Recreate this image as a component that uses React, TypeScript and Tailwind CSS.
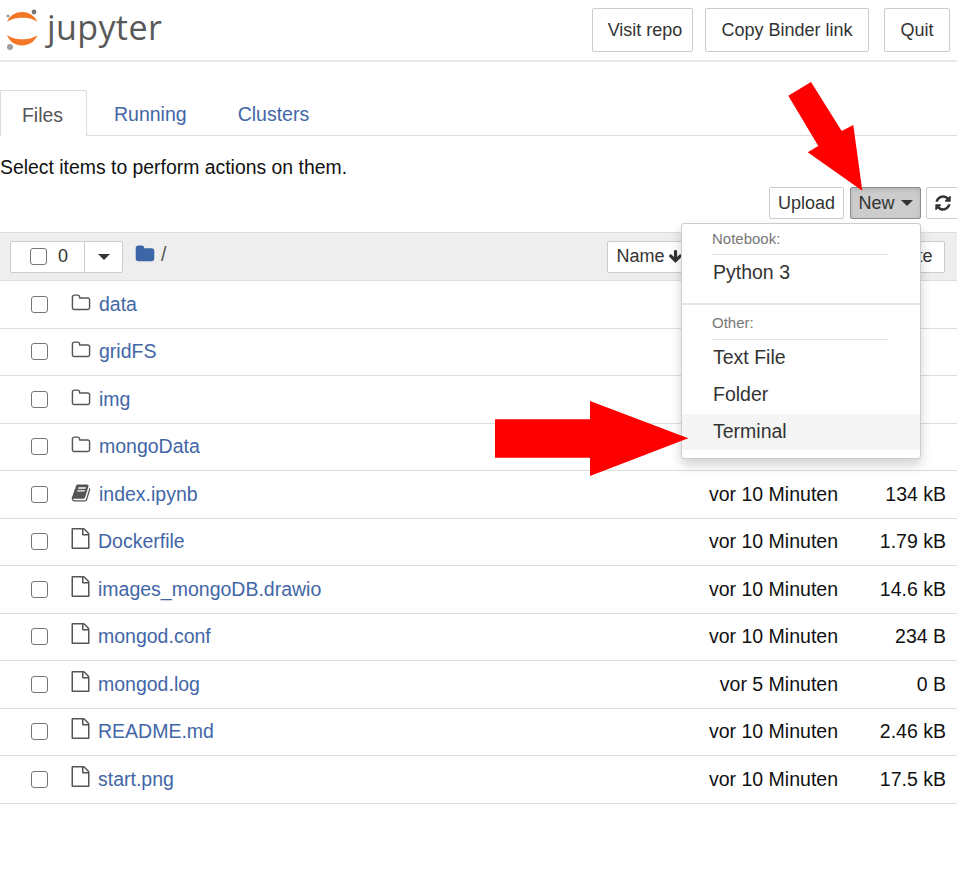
import React from 'react';

const rows = [
  { name: 'data', kind: 'folder', date: '', size: '' },
  { name: 'gridFS', kind: 'folder', date: '', size: '' },
  { name: 'img', kind: 'folder', date: '', size: '' },
  { name: 'mongoData', kind: 'folder', date: '', size: '' },
  { name: 'index.ipynb', kind: 'book', date: 'vor 10 Minuten', size: '134 kB' },
  { name: 'Dockerfile', kind: 'file', date: 'vor 10 Minuten', size: '1.79 kB' },
  { name: 'images_mongoDB.drawio', kind: 'file', date: 'vor 10 Minuten', size: '14.6 kB' },
  { name: 'mongod.conf', kind: 'file', date: 'vor 10 Minuten', size: '234 B' },
  { name: 'mongod.log', kind: 'file', date: 'vor 5 Minuten', size: '0 B' },
  { name: 'README.md', kind: 'file', date: 'vor 10 Minuten', size: '2.46 kB' },
  { name: 'start.png', kind: 'file', date: 'vor 10 Minuten', size: '17.5 kB' },
];

// Font Awesome 4 glyphs, 1792 box
const icons: Record<string, string> = {
  folder: 'M1600 1312v-704q0-40-28-68t-68-28h-704q-40 0-68-28t-28-68v-64q0-40-28-68t-68-28h-320q-40 0-68 28t-28 68v960q0 40 28 68t68 28h1216q40 0 68-28t28-68zm128-704v704q0 92-66 158t-158 66h-1216q-92 0-158-66t-66-158v-960q0-92 66-158t158-66h320q92 0 158 66t66 158v32h672q92 0 158 66t66 158z',
  file: 'M1596 380q28 28 48 76t20 88v1152q0 40-28 68t-68 28h-1344q-40 0-68-28t-28-68v-1600q0-40 28-68t68-28h896q40 0 88 20t76 48zm-444-244v376h376q-10-29-22-41l-313-313q-12-12-41-22zm384 1528v-1024h-416q-40 0-68-28t-28-68v-416h-768v1536h1280z',
  book: 'M1703 478q40 57 18 129l-275 906q-19 64-76.5 107.5t-122.5 43.5h-923q-77 0-148.5-53.5t-99.5-131.5q-24-67-2-127 0-4 3-27t4-37q1-8-3-21.5t-3-19.5q2-11 8-21t16.5-23.5 16.5-23.5q23-38 45-91.5t30-91.5q3-10 .5-30t-.5-28q3-11 17-28t17-23q21-36 42-92t25-90q1-9-2.5-32t.5-28q4-13 22-30.5t22-22.5q19-26 42.5-84.5t27.5-96.5q1-8-3-25.5t-2-26.5q2-8 9-18t18-23 17-21q8-12 16.5-30.5t15-35 16-36 19.5-32 26.5-23.5 36-11.5 47.5 5.5l-1 3q38-9 51-9h761q74 0 114 56t18 130l-274 906q-36 119-71.5 153.5t-128.5 34.5h-869q-27 0-38 15-11 16-1 43 24 70 144 70h923q29 0 56-15.5t35-41.5l300-987q7-22 5-57 38 15 59 43zm-1064 2q-4 13 2 22.5t20 9.5h608q13 0 25.5-9.5t16.5-22.5l21-64q4-13-2-22.5t-20-9.5h-608q-13 0-25.5 9.5t-16.5 22.5zm-83 256q-4 13 2 22.5t20 9.5h608q13 0 25.5-9.5t16.5-22.5l21-64q4-13-2-22.5t-20-9.5h-608q-13 0-25.5 9.5t-16.5 22.5z',
  refresh: 'M1639 1056q0 5-1 7-64 268-268 434.5t-478 166.5q-146 0-282.5-55t-243.5-157l-129 129q-19 19-45 19t-45-19-19-45v-448q0-26 19-45t45-19h448q26 0 45 19t19 45-19 45l-137 137q71 66 161 102t187 36q134 0 250-65t186-179q11-17 53-117 8-23 30-23h192q13 0 22.5 9.5t9.5 22.5zm25-800v448q0 26-19 45t-45 19h-448q-26 0-45-19t-19-45 19-45l138-138q-148-137-349-137-134 0-250 65t-186 179q-11 17-53 117-8 23-30 23h-199q-13 0-22.5-9.5t-9.5-22.5v-7q65-268 270-434.5t480-166.5q146 0 284 55.5t245 156.5l130-129q19-19 45-19t45 19 19 45z',
  arrowDown: 'M1675 832q0 53-37 90l-651 652q-39 37-91 37-53 0-90-37l-651-652q-38-36-38-90 0-53 38-91l74-75q39-37 91-37 53 0 90 37l294 294v-704q0-52 38-90t90-38h128q52 0 90 38t38 90v704l294-294q37-37 90-37 52 0 91 37l75 75q37 39 37 91z',
  solidFolder: 'M1728 608v704q0 92-66 158t-158 66h-1216q-92 0-158-66t-66-158v-960q0-92 66-158t158-66h320q92 0 158 66t66 158v32h672q92 0 158 66t66 158z',
};

function Fa({ name, size, color, className }: { name: string; size: number; color: string; className?: string }) {
  return (
    <svg width={size} height={size} viewBox="0 0 1792 1792" className={`shrink-0 ${className ?? ''}`}>
      <path d={icons[name]} fill={color} />
    </svg>
  );
}

function Logo() {
  return (
    <svg width="36" height="42" viewBox="0 0 36 42" className="shrink-0">
      <path d="M2 13 C7 -0.3 27 -0.3 32.5 13 C26 7.3 9 7.3 2 13 Z" fill="#f37726" />
      <path d="M2 26 C9 31.7 26 31.7 32.5 26 C27 40 7 40 2 26 Z" fill="#f37726" />
      <circle cx="29" cy="3" r="2.4" fill="#767677" />
      <circle cx="3" cy="7" r="1.6" fill="#9e9e9e" />
      <circle cx="5" cy="38" r="3" fill="#9e9e9e" />
    </svg>
  );
}

function Checkbox() {
  return <span className="block w-[17px] h-[17px] shrink-0 rounded-[3px] border-[1.5px] border-[#767676] bg-white" />;
}

function Btn({ children, className }: { children: React.ReactNode; className?: string }) {
  return (
    <div className={`flex items-center justify-center bg-white border border-[#ccc] rounded-[2px] text-[#333] text-[18px] ${className ?? ''}`}>
      {children}
    </div>
  );
}

export default function App() {
  return (
    <div className="relative w-[957px] h-[877px] overflow-hidden bg-white text-[19.5px] text-[#333] font-['Liberation_Sans',Arial,sans-serif]">
      {/* header */}
      <div className="flex items-center h-[62px] border-b-2 border-[#e7e7e7] pl-[5px]">
        <Logo />
        <span className="ml-[6px] -mt-[6px] text-[34px] leading-[44px] tracking-[0.4px] text-[#585858] font-['Open_Sans',sans-serif]">jupyter</span>
        <div className="flex ml-auto mr-[7px]">
          <Btn className="w-[101px] h-[44px] pl-[5px]">Visit repo</Btn>
          <Btn className="w-[164px] h-[44px] ml-[12px]">Copy Binder link</Btn>
          <Btn className="w-[66px] h-[44px] ml-[15px]">Quit</Btn>
        </div>
      </div>

      {/* tabs */}
      <div className="flex mt-[28px] h-[46px] border-b border-[#ddd] text-[#4266a6]">
        <div className="w-[87px] h-[46px] flex items-center justify-center pt-[4px] pr-[2px] bg-white border border-b-0 border-[#ddd] rounded-tr-[3px] text-[#555]">Files</div>
        <div className="flex items-center pt-[4px] ml-[27px]">Running</div>
        <div className="flex items-center pt-[4px] ml-[51px]">Clusters</div>
      </div>

      <div className="h-[51px] leading-[62px] text-[19.4px] text-[#111]">Select items to perform actions on them.</div>

      {/* upload / new */}
      <div className="flex justify-start h-[32px] pl-[769px]">
        <Btn className="w-[75px] h-[32px] shrink-0">Upload</Btn>
        <div className="ml-[6px] w-[71px] h-[32px] shrink-0 flex items-center justify-center gap-[6px] text-[18px] bg-[#ccc] border border-[#8c8c8c] rounded-[2px] shadow-[inset_0_2px_4px_rgba(0,0,0,0.12)]">
          New
          <span className="w-0 h-0 border-x-[6px] border-x-transparent border-t-[6px] border-t-[#333]" />
        </div>
        <Btn className="ml-[5px] w-[40px] h-[32px] shrink-0 pr-[7px]">
          <Fa name="refresh" size={18} color="#333" />
        </Btn>
      </div>

      {/* list toolbar */}
      <div className="flex items-center mt-[13px] h-[49px] bg-[#eee] border-y border-[#ddd] pl-[10px]">
        <div className="flex w-[113px] h-[32px] bg-white border border-[#ccc] rounded-[2px]">
          <div className="flex items-center w-[74px] pl-[19px] gap-[11px] border-r border-[#ccc] text-[#333]">
            <Checkbox />
            <span className="text-[18px]">0</span>
          </div>
          <div className="flex flex-1 items-center justify-center">
            <span className="w-0 h-0 border-x-[6px] border-x-transparent border-t-[6px] border-t-[#333]" />
          </div>
        </div>
        <Fa name="solidFolder" size={20} color="#3d66a8" className="ml-[12px] -mt-[5px]" />
        <span className="ml-[6px] -mt-[3px] text-[#555]">/</span>
        <Btn className="ml-[441px] w-[90px] h-[32px] justify-start pl-[8px] gap-[4px]">
          Name <Fa name="arrowDown" size={15} color="#333" />
        </Btn>
        <Btn className="ml-[180px] w-[68px] h-[32px]"><span className="ml-[4px]">Date</span></Btn>
      </div>

      {/* rows */}
      <div>
        {rows.map((r) => (
          <div key={r.name} className="flex items-center h-[47.5px] border-b border-[#ddd] pl-[31px] pr-[11px]">
            <Checkbox />
            <div className="flex items-center ml-[23px] w-[20px]">
              {r.kind === 'folder' && <Fa name="folder" size={20} color="#555" className="-mt-[3px]" />}
              {r.kind === 'book' && <Fa name="book" size={20} color="#555" className="-mt-[3px]" />}
              {r.kind === 'file' && <Fa name="file" size={21} color="#555" className="-mt-[6px] -ml-[1px]" />}
            </div>
            <span className={`${r.kind === 'file' ? 'ml-[7px]' : 'ml-[8px]'} text-[#4266a6]`}>{r.name}</span>
            <span className="ml-auto text-[#111]">{r.date}</span>
            <span className="w-[108px] text-right text-[#111]">{r.size}</span>
          </div>
        ))}
      </div>

      {/* new dropdown */}
      <div className="absolute left-[681px] top-[223px] w-[240px] h-[236px] bg-white border border-[#ccc] rounded-[3px] shadow-[0_6px_12px_rgba(0,0,0,0.18)]">
        <div className="ml-[30px] mr-[31px] mt-[5px] h-[26px] leading-[20px] text-[15px] text-[#777] border-b border-[#e5e5e5]">Notebook:</div>
        <div className="pl-[31px] h-[36px] leading-[34px]">Python 3</div>
        <div className="mt-[12px] h-[2px] bg-[#e5e5e5]" />
        <div className="ml-[30px] mr-[31px] mt-[8px] h-[27px] leading-[20px] text-[15px] text-[#777] border-b border-[#e5e5e5]">Other:</div>
        <div className="pl-[31px] h-[37px] leading-[34px]">Text File</div>
        <div className="pl-[31px] h-[37px] leading-[34px]">Folder</div>
        <div className="pl-[31px] h-[36px] leading-[34px] bg-[#f5f5f5]">Terminal</div>
      </div>

      {/* red arrows */}
      <svg className="absolute left-0 top-0 pointer-events-none" width="957" height="877" viewBox="0 0 957 877">
        <polygon points="788.3,95.7 811,82 841.7,131 853.3,125 862.3,190.7 807.7,152.3 818.3,146" fill="#ff0000" />
        <polygon points="495,419.3 590,419.3 590,401 688.3,438.3 590,476 590,457.7 495,457.7" fill="#ff0000" />
      </svg>
    </div>
  );
}
